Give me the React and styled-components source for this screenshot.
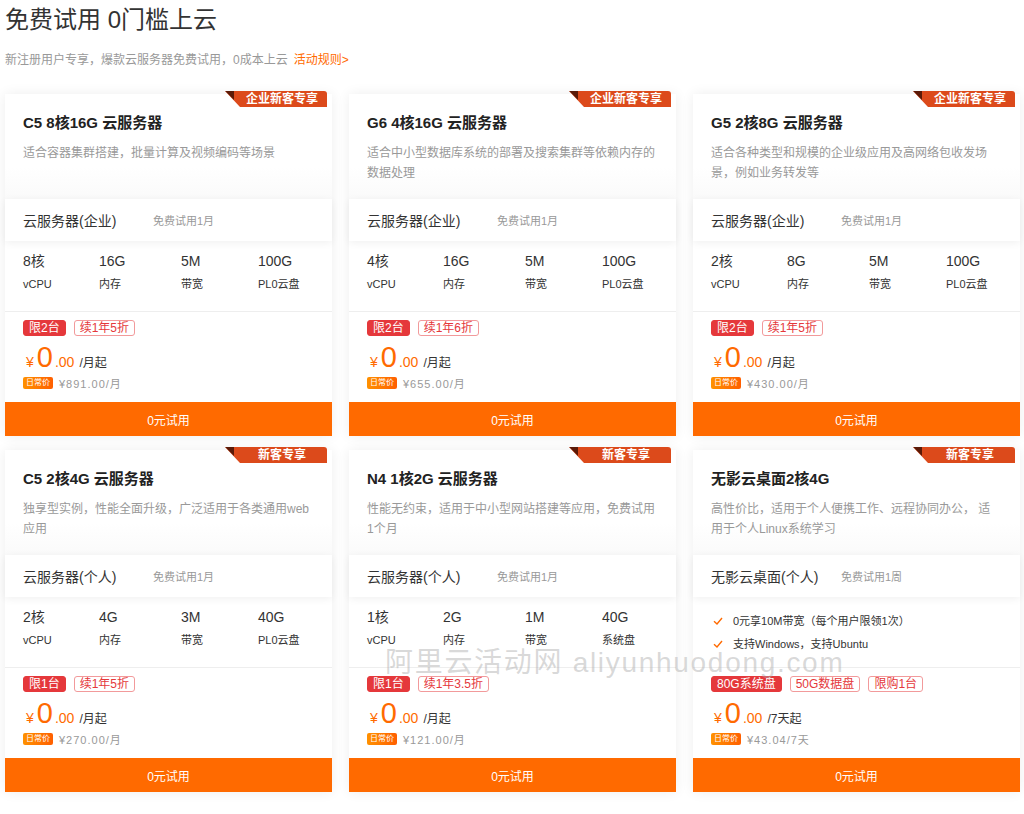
import React from 'react'
import styled, { createGlobalStyle } from 'styled-components'

const GlobalStyle = createGlobalStyle`
  body {
    margin: 0;
    background: #fff;
    font-family: "Liberation Sans", "Noto Sans CJK SC", sans-serif;
    color: #333;
  }
`

const Page = styled.div`
  position: relative;
  padding: 4px 5px 20px;
`

const Heading = styled.h1`
  margin: 0;
  font-size: 24px;
  font-weight: 400;
  line-height: 32px;
  color: #333;
`

const Sub = styled.p`
  margin: 16px 0 0;
  font-size: 12px;
  line-height: 16px;
  color: #999;
`

const RuleLink = styled.a`
  color: #ff6a00;
  margin-left: 6px;
  text-decoration: none;
`

const Grid = styled.div`
  display: grid;
  grid-template-columns: repeat(3, 327px);
  column-gap: 17px;
  row-gap: 14px;
  margin-top: 26px;
`

const Card = styled.div`
  position: relative;
  background: #fff;
  box-shadow: 0 0 12px rgba(0, 0, 0, 0.07);
  display: flex;
  flex-direction: column;
`

const Badge = styled.div`
  position: absolute;
  top: -3px;
  right: 5px;
  width: 102px;
  height: 16px;
  box-sizing: border-box;
  padding-left: 12px;
  background: #dc4a1b;
  border-top-right-radius: 3px;
  clip-path: polygon(0 0, 100% 0, 100% 100%, 15px 100%);
  color: #fff;
  font-size: 12px;
  font-weight: 700;
  line-height: 16px;
  text-align: center;
  &::before {
    content: '';
    position: absolute;
    left: 0;
    top: 0;
    width: 9px;
    height: 9px;
    background: #5a1a08;
    clip-path: polygon(0 0, 100% 0, 100% 100%);
  }
`

const Head = styled.div`
  padding: 19px 18px 16px;
  background: linear-gradient(#fff 70%, #fafafa);
`

const Title = styled.h3`
  margin: 0;
  font-size: 15px;
  font-weight: 700;
  line-height: 20px;
  color: #222;
`

const Desc = styled.p`
  margin: 10px 0 0;
  height: 40px;
  font-size: 12px;
  line-height: 20px;
  color: #999;
`

const Band = styled.div`
  position: relative;
  z-index: 1;
  height: 42px;
  display: flex;
  align-items: center;
  padding: 0 18px;
  background: #fff;
  box-shadow: 0 2px 8px rgba(0, 0, 0, 0.06);
`

const BandName = styled.span`
  width: 130px;
  font-size: 14px;
  color: #333;
`

const BandNote = styled.span`
  font-size: 11px;
  color: #999;
`

const Specs = styled.div`
  height: 71px;
  box-sizing: border-box;
  border-bottom: 1px solid #eee;
  padding: 12px 18px 0;
  display: grid;
  grid-template-columns: 76px 82px 77px auto;
  align-content: start;
`

const Spec = styled.div`
  display: flex;
  flex-direction: column;
`

const SpecValue = styled.span`
  font-size: 14px;
  line-height: 16px;
  color: #333;
`

const SpecLabel = styled.span`
  margin-top: 8px;
  font-size: 11px;
  line-height: 14px;
  color: #333;
`

const Checks = styled.ul`
  height: 71px;
  box-sizing: border-box;
  border-bottom: 1px solid #eee;
  margin: 0;
  padding: 16px 18px 0;
  list-style: none;
  display: flex;
  flex-direction: column;
  gap: 7px;
`

const CheckItem = styled.li`
  display: flex;
  align-items: center;
  font-size: 11px;
  line-height: 16px;
  color: #333;
  svg {
    margin: 0 10px 0 2px;
  }
`

const PriceBox = styled.div`
  padding: 8px 18px 12px;
`

const Tags = styled.div`
  display: flex;
  gap: 8px;
`

const Tag = styled.span`
  height: 16px;
  box-sizing: border-box;
  padding: 0 5px;
  border-radius: 3px;
  font-size: 12px;
  line-height: 14px;
  border: 1px solid ${p => (p.$fill ? '#e5383b' : '#f29a9b')};
  background: ${p => (p.$fill ? '#e5383b' : '#fff')};
  color: ${p => (p.$fill ? '#fff' : '#e5383b')};
`

const Price = styled.div`
  margin-top: 7px;
  height: 28px;
  display: flex;
  align-items: baseline;
  color: #ff6a00;
  padding-left: 3px;
`

const Yen = styled.span`
  font-size: 14px;
  margin-right: 3px;
`

const Big = styled.span`
  font-size: 29px;
  line-height: 28px;
`

const Cents = styled.span`
  font-size: 14px;
  margin-left: 2px;
`

const Unit = styled.span`
  font-size: 12px;
  color: #333;
  margin-left: 5px;
`

const Daily = styled.div`
  margin-top: 5px;
  height: 14px;
  display: flex;
  align-items: center;
`

const DailyTag = styled.span`
  height: 12px;
  padding: 0 3px;
  border-radius: 2px;
  background: linear-gradient(90deg, #ff9100, #ff5f00);
  color: #fff;
  font-size: 8px;
  line-height: 12px;
`

const DailyPrice = styled.span`
  margin-left: 6px;
  font-size: 11px;
  color: #999;
  letter-spacing: 1px;
`

const Button = styled.button`
  height: 34px;
  border: none;
  background: #ff6a00;
  color: #fff;
  font-family: inherit;
  font-size: 12px;
  cursor: pointer;
`

const Watermark = styled.div`
  position: absolute;
  left: 385px;
  top: 647px;
  font-size: 28px;
  line-height: 32px;
  letter-spacing: 1.7px;
  color: rgba(170, 170, 170, 0.45);
  pointer-events: none;
  white-space: nowrap;
`

const Check = () => (
  <svg width="10" height="10" viewBox="0 0 10 10">
    <path d="M1 5.2 L4 8 L9 2" fill="none" stroke="#ff6a00" strokeWidth="1.4" />
  </svg>
)

const cards = [
  {
    badge: '企业新客专享', title: 'C5 8核16G 云服务器', desc: '适合容器集群搭建，批量计算及视频编码等场景',
    band: '云服务器(企业)', note: '免费试用1月',
    specs: [['8核', 'vCPU'], ['16G', '内存'], ['5M', '带宽'], ['100G', 'PL0云盘']],
    tags: ['限2台', '续1年5折'], unit: '/月起', daily: '¥891.00/月',
  },
  {
    badge: '企业新客专享', title: 'G6 4核16G 云服务器', desc: '适合中小型数据库系统的部署及搜索集群等依赖内存的数据处理',
    band: '云服务器(企业)', note: '免费试用1月',
    specs: [['4核', 'vCPU'], ['16G', '内存'], ['5M', '带宽'], ['100G', 'PL0云盘']],
    tags: ['限2台', '续1年6折'], unit: '/月起', daily: '¥655.00/月',
  },
  {
    badge: '企业新客专享', title: 'G5 2核8G 云服务器', desc: '适合各种类型和规模的企业级应用及高网络包收发场景，例如业务转发等',
    band: '云服务器(企业)', note: '免费试用1月',
    specs: [['2核', 'vCPU'], ['8G', '内存'], ['5M', '带宽'], ['100G', 'PL0云盘']],
    tags: ['限2台', '续1年5折'], unit: '/月起', daily: '¥430.00/月',
  },
  {
    badge: '新客专享', title: 'C5 2核4G 云服务器', desc: '独享型实例，性能全面升级，广泛适用于各类通用web应用',
    band: '云服务器(个人)', note: '免费试用1月',
    specs: [['2核', 'vCPU'], ['4G', '内存'], ['3M', '带宽'], ['40G', 'PL0云盘']],
    tags: ['限1台', '续1年5折'], unit: '/月起', daily: '¥270.00/月',
  },
  {
    badge: '新客专享', title: 'N4 1核2G 云服务器', desc: '性能无约束，适用于中小型网站搭建等应用，免费试用1个月',
    band: '云服务器(个人)', note: '免费试用1月',
    specs: [['1核', 'vCPU'], ['2G', '内存'], ['1M', '带宽'], ['40G', '系统盘']],
    tags: ['限1台', '续1年3.5折'], unit: '/月起', daily: '¥121.00/月',
  },
  {
    badge: '新客专享', title: '无影云桌面2核4G', desc: '高性价比，适用于个人便携工作、远程协同办公， 适用于个人Linux系统学习',
    band: '无影云桌面(个人)', note: '免费试用1周',
    checks: ['0元享10M带宽（每个用户限领1次）', '支持Windows，支持Ubuntu'],
    tags: ['80G系统盘', '50G数据盘', '限购1台'], unit: '/7天起', daily: '¥43.04/7天',
  },
]

function ProductCard({ item }) {
  return (
    <Card>
      <Badge>{item.badge}</Badge>
      <Head>
        <Title>{item.title}</Title>
        <Desc>{item.desc}</Desc>
      </Head>
      <Band>
        <BandName>{item.band}</BandName>
        <BandNote>{item.note}</BandNote>
      </Band>
      {item.checks ? (
        <Checks>
          {item.checks.map(c => (
            <CheckItem key={c}><Check />{c}</CheckItem>
          ))}
        </Checks>
      ) : (
        <Specs>
          {item.specs.map(([v, l]) => (
            <Spec key={l + v}>
              <SpecValue>{v}</SpecValue>
              <SpecLabel>{l}</SpecLabel>
            </Spec>
          ))}
        </Specs>
      )}
      <PriceBox>
        <Tags>
          {item.tags.map((t, i) => (
            <Tag key={t} $fill={i === 0}>{t}</Tag>
          ))}
        </Tags>
        <Price>
          <Yen>¥</Yen>
          <Big>0</Big>
          <Cents>.00</Cents>
          <Unit>{item.unit}</Unit>
        </Price>
        <Daily>
          <DailyTag>日常价</DailyTag>
          <DailyPrice>{item.daily}</DailyPrice>
        </Daily>
      </PriceBox>
      <Button>0元试用</Button>
    </Card>
  )
}

export default function App() {
  return (
    <Page>
      <GlobalStyle />
      <Heading>免费试用 0门槛上云</Heading>
      <Sub>
        新注册用户专享，爆款云服务器免费试用，0成本上云
        <RuleLink href="#">活动规则&gt;</RuleLink>
      </Sub>
      <Grid>
        {cards.map(c => (
          <ProductCard key={c.title} item={c} />
        ))}
      </Grid>
      <Watermark>阿里云活动网 aliyunhuodong.com</Watermark>
    </Page>
  )
}
